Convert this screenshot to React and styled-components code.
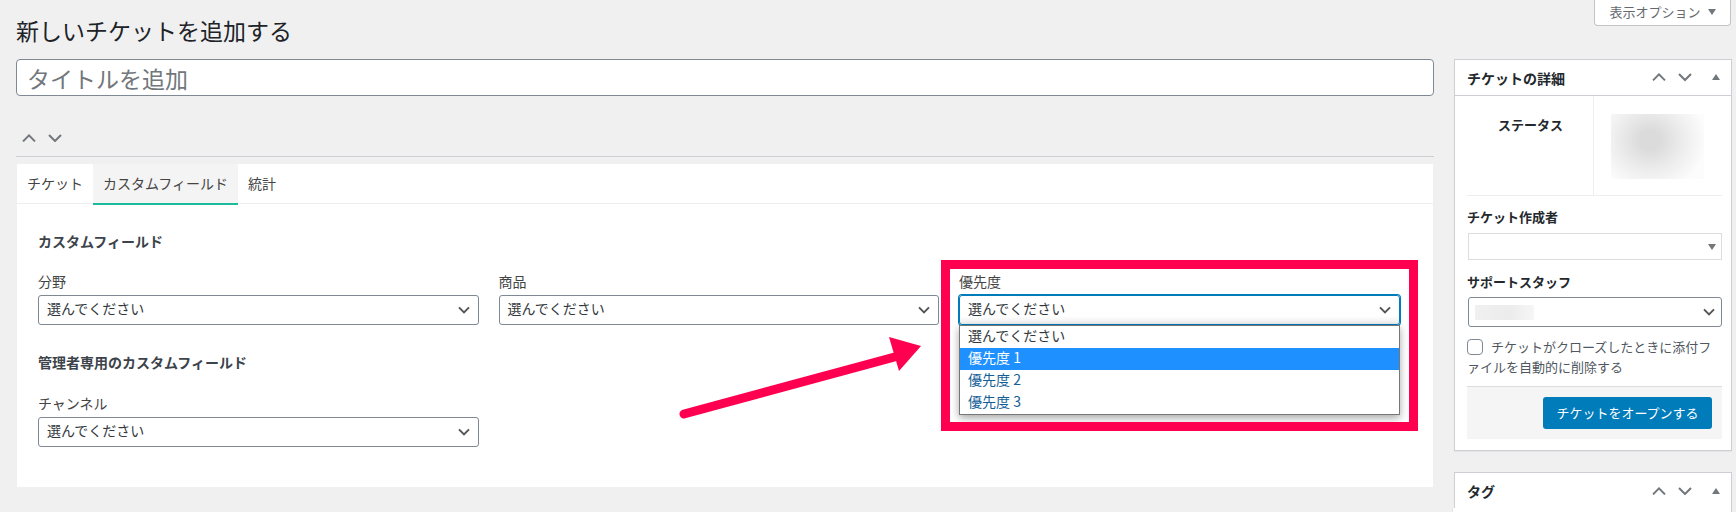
import React from "react";
import styled, { createGlobalStyle } from "styled-components";

const Global = createGlobalStyle`
  html, body { margin: 0; padding: 0; background: #f0f0f1; }
  body {
    font-family: "Noto Sans CJK JP", "Liberation Sans", sans-serif;
    font-size: 14px;
    color: #3c434a;
    width: 1736px;
    height: 512px;
    overflow: hidden;
  }
  * { box-sizing: border-box; }
`;

const Page = styled.div`
  position: relative;
  padding: 0 5px 0 16px;
  height: 512px;
  overflow: hidden;
`;
const Header = styled.header`
  display: flex;
  justify-content: space-between;
  align-items: flex-start;
  height: 59px;
`;
const PageTitle = styled.h1`
  margin: 15px 0 0;
  font-size: 23px;
  line-height: 30px;
  font-weight: 400;
  color: #1d2327;
`;
const ScreenTab = styled.div`
  display: flex;
  align-items: center;
  justify-content: center;
  gap: 7px;
  width: 137px;
  height: 26px;
  padding-bottom: 2px;
  background: #fff;
  border: 1px solid #c3c4c7;
  border-top: 0;
  border-radius: 0 0 4px 4px;
  font-size: 13px;
  color: #646970;
`;
const Columns = styled.div`
  display: flex;
  align-items: flex-start;
  gap: 20px;
`;
const Main = styled.main`
  flex: 0 0 1418px;
`;
const Side = styled.aside`
  flex: 0 0 277px;
  display: flex;
  flex-direction: column;
  gap: 21px;
`;
const TitleInput = styled.div`
  height: 37px;
  margin-bottom: 36px;
  padding-left: 10px;
  display: flex;
  align-items: center;
  background: #fff;
  border: 1px solid #7e8993;
  border-radius: 4px;
  font-size: 23px;
  color: #72777c;
`;
const MoveRow = styled.div`
  display: flex;
  gap: 12px;
  align-items: center;
  height: 24px;
  padding-left: 6px;
  padding-bottom: 12px;
`;
const Rule = styled.div`
  height: 1px;
  background: #ccd0d4;
  margin: 0 0 7px;
`;
const Panel = styled.section`
  margin-left: 1px;
  width: 1416px;
  height: 323px;
  background: #fff;
`;
const Tabs = styled.nav`
  display: flex;
  height: 40px;
  border-bottom: 1px solid #eee;
`;
const Tab = styled.div`
  height: 41px;
  padding: 0 10px ${(p) => (p.$active ? 1 : 3)}px;
  display: flex;
  align-items: center;
  font-size: 14px;
  color: #444;
  background: ${(p) => (p.$active ? "#f4f4f4" : "transparent")};
  border-bottom: ${(p) => (p.$active ? "2px solid #1abc9c" : "0")};
`;
const PanelBody = styled.div`
  padding: 29px 21px 0;
`;
const SectionTitle = styled.h3`
  margin: ${(p) => p.$top || 0}px 0 0;
  height: 20px;
  font-size: 14px;
  line-height: 16px;
  font-weight: 700;
  color: #3c434a;
`;
const FieldRow = styled.div`
  display: grid;
  grid-template-columns: repeat(3, 440.5px);
  gap: 20px;
  margin-top: ${(p) => p.$top}px;
  height: 65px;
`;
const Field = styled.div`
  position: relative;
  display: flex;
  flex-direction: column;
`;
const Label = styled.label`
  font-size: 14px;
  line-height: 16px;
  height: 20px;
  margin-bottom: 2px;
  color: #444;
`;
const SelectBox = styled.div`
  height: 30px;
  display: flex;
  align-items: center;
  justify-content: space-between;
  padding: 0 8px 0 8px;
  background: ${(p) => (p.$open ? "linear-gradient(#fff 70%, #f0f0f0)" : "#fff")};
  border: 1px solid ${(p) => (p.$open ? "#007cba" : "#7e8993")};
  box-shadow: ${(p) => (p.$open ? "0 0 0 1px #007cba" : "none")};
  border-radius: 3px;
  font-size: 14px;
  color: #32373c;
`;
const SelectText = styled.span`
  margin-top: -4px;
`;
const Dropdown = styled.ul`
  position: absolute;
  left: 0;
  right: 0;
  top: 52px;
  height: 90px;
  margin: 0;
  padding: 0 0 1px;
  list-style: none;
  background: #fff;
  border: 1px solid #767676;
  box-shadow: 0 3px 8px rgba(0, 0, 0, 0.35);
  z-index: 2;
`;
const Option = styled.li`
  height: 22px;
  line-height: 18px;
  padding-left: 8px;
  font-size: 14px;
  color: ${(p) => (p.$selected ? "#fff" : p.$plain ? "#32373c" : "#135e96")};
  background: ${(p) => (p.$selected ? "#1e90ff" : "transparent")};
`;
const Callout = styled.div`
  position: absolute;
  left: 941px;
  top: 260px;
  width: 477px;
  height: 171px;
  border: 9px solid #ff0050;
  z-index: 3;
  pointer-events: none;
`;
const ArrowSvg = styled.svg`
  position: absolute;
  left: 670px;
  top: 330px;
  z-index: 3;
`;
const Box = styled.section`
  position: relative;
  background: #fff;
  border: 1px solid #ccd0d4;
  box-shadow: 0 1px 1px rgba(0, 0, 0, 0.04);
`;
const BoxHead = styled.div`
  height: 36px;
  display: flex;
  align-items: center;
  padding: 0 0 0 12px;
  border-bottom: ${(p) => (p.$flat ? "0" : "1px solid #ccd0d4")};
`;
const BoxTitle = styled.h2`
  flex: 1;
  margin: 0;
  font-size: 14px;
  font-weight: 700;
  color: #23282d;
`;
const HeadIcons = styled.div`
  display: flex;
  align-items: center;
`;
const BoxBody = styled.div`
  padding: 0 9px 0 12px;
`;
const StatusRow = styled.div`
  display: flex;
  height: 100px;
  border-bottom: 1px solid #eee;
`;
const StatusLabel = styled.div`
  width: 127px;
  padding-top: 19px;
  padding-left: 31px;
  font-size: 13px;
  line-height: 20px;
  font-weight: 700;
  color: #23282d;
  border-right: 1px solid #eee;
`;
const StatusValue = styled.div`
  padding: 18px 0 0 17px;
`;
const Blurred = styled.div`
  width: 93px;
  height: 65px;
  background: radial-gradient(ellipse 56px 52px at 42% 40%, #dbdbdb 18%, #eeeeee 62%, #fcfcfc 100%);
`;
const SideLabel = styled.div`
  margin-top: ${(p) => p.$top}px;
  height: 20px;
  font-size: 13px;
  line-height: ${(p) => p.$lh || 20}px;
  font-weight: 700;
  color: #23282d;
`;
const Select2 = styled.div`
  position: relative;
  margin: 6px 0 0 1px;
  height: 27px;
  width: 254px;
  border: 1px solid #ddd;
  display: flex;
  align-items: center;
  justify-content: flex-end;
  padding-right: 5px;
`;
const StaffSelect = styled(SelectBox)`
  margin: 4px 0 0 1px;
  width: 254px;
  padding: 0 6px;
`;
const BlurName = styled.div`
  width: 59px;
  height: 15px;
  background: linear-gradient(90deg, #f0f0f0, #ececec 60%, #f6f6f6);
`;
const CheckRow = styled.div`
  margin-top: 10px;
  font-size: 13px;
  line-height: 20px;
  color: #50575e;
`;
const Check = styled.span`
  display: inline-block;
  width: 16px;
  height: 16px;
  margin-right: 8px;
  vertical-align: -3px;
  border: 1px solid #7e8993;
  border-radius: 4px;
  background: #fff;
`;
const Footer = styled.div`
  margin-top: 9px;
  height: 53px;
  padding: 10px 10px 0 0;
  display: flex;
  justify-content: flex-end;
  align-items: flex-start;
  background: #f5f5f5;
  border-top: 1px solid #ddd;
`;
const OpenButton = styled.button`
  width: 169px;
  height: 32px;
  padding: 0 0 2px;
  border: 0;
  border-radius: 3px;
  background: #007cba;
  color: #fff;
  font: 400 13px "Noto Sans CJK JP", sans-serif;
`;
const BottomBox = styled(Box)`
  height: 60px;
  &::after {
    content: "";
    position: absolute;
    left: -3px;
    right: 0;
    top: 35px;
    height: 10px;
    background: #fff;
    border-left: 1px solid #e4e4e4;
  }
`;
const Gap = styled.div`
  height: 11px;
`;
const IconSlot = styled.span`
  display: inline-flex;
  width: ${(p) => p.$w}px;
  margin-left: ${(p) => p.$ml || 0}px;
  justify-content: center;
`;

const Chevron = ({ up, w = 14, color = "#72777c", sw = 2 }) => (
  <svg width={w} height={w * 0.6} viewBox="0 0 14 8.4" fill="none" aria-hidden="true">
    <path d={up ? "M1 7.4 7 1.4l6 6" : "M1 1 7 7l6-6"} stroke={color} strokeWidth={sw} />
  </svg>
);
const Caret = ({ up, size = 8, color = "#72777c" }) => (
  <svg width={size} height={size * 0.75} viewBox="0 0 8 6" aria-hidden="true">
    <path d={up ? "M0 6 4 0l4 6z" : "M0 0h8L4 6z"} fill={color} />
  </svg>
);
const SelChevron = () => (
  <svg width="12" height="8" viewBox="0 0 12 8" fill="none" aria-hidden="true">
    <path d="M1 1.4 6 6.4l5-5" stroke="#555" strokeWidth="2" />
  </svg>
);

const BoxControls = () => (
  <HeadIcons>
    <IconSlot $w={26}><Chevron up /></IconSlot>
    <IconSlot $w={26}><Chevron /></IconSlot>
    <IconSlot $w={30} $ml={3}><Caret up /></IconSlot>
  </HeadIcons>
);

const pick = "選んでください";

const PickSelect = ({ open }) => (
  <SelectBox $open={open}>
    <SelectText>{pick}</SelectText>
    <SelChevron />
  </SelectBox>
);

export default function App() {
  return (
    <Page>
      <Global />
      <Header>
        <PageTitle>新しいチケットを追加する</PageTitle>
        <ScreenTab>
          表示オプション
          <Caret size={8} />
        </ScreenTab>
      </Header>
      <Columns>
        <Main>
          <TitleInput>タイトルを追加</TitleInput>
          <MoveRow>
            <Chevron up />
            <Chevron />
          </MoveRow>
          <Rule />
          <Panel>
            <Tabs>
              <Tab>チケット</Tab>
              <Tab $active>カスタムフィールド</Tab>
              <Tab>統計</Tab>
            </Tabs>
            <PanelBody>
              <SectionTitle>カスタムフィールド</SectionTitle>
              <FieldRow $top={20}>
                <Field>
                  <Label>分野</Label>
                  <PickSelect />
                </Field>
                <Field>
                  <Label>商品</Label>
                  <PickSelect />
                </Field>
                <Field>
                  <Label>優先度</Label>
                  <PickSelect open />
                  <Dropdown>
                    <Option $plain>{pick}</Option>
                    <Option $selected>優先度 1</Option>
                    <Option>優先度 2</Option>
                    <Option>優先度 3</Option>
                  </Dropdown>
                </Field>
              </FieldRow>
              <SectionTitle $top={16}>管理者専用のカスタムフィールド</SectionTitle>
              <FieldRow $top={21}>
                <Field>
                  <Label>チャンネル</Label>
                  <PickSelect />
                </Field>
              </FieldRow>
            </PanelBody>
          </Panel>
        </Main>
        <Side>
          <Box>
            <BoxHead>
              <BoxTitle>チケットの詳細</BoxTitle>
              <BoxControls />
            </BoxHead>
            <BoxBody>
              <StatusRow>
                <StatusLabel>ステータス</StatusLabel>
                <StatusValue><Blurred /></StatusValue>
              </StatusRow>
              <SideLabel $top={11}>チケット作成者</SideLabel>
              <Select2><Caret size={8} /></Select2>
              <SideLabel $top={13} $lh={18}>サポートスタッフ</SideLabel>
              <StaffSelect><BlurName /><SelChevron /></StaffSelect>
              <CheckRow><Check />チケットがクローズしたときに添付ファイルを自動的に削除する</CheckRow>
              <Footer><OpenButton>チケットをオープンする</OpenButton></Footer>
              <Gap />
            </BoxBody>
          </Box>
          <BottomBox>
            <BoxHead $flat>
              <BoxTitle>タグ</BoxTitle>
              <BoxControls />
            </BoxHead>
          </BottomBox>
        </Side>
      </Columns>
      <Callout />
      <ArrowSvg width="260" height="100" viewBox="0 0 260 100" aria-hidden="true">
        <path d="M14 84 232 25" stroke="#ff0050" strokeWidth="9" strokeLinecap="round" fill="none" />
        <path d="M219 7 251 16 229 41z" fill="#ff0050" />
      </ArrowSvg>
    </Page>
  );
}
